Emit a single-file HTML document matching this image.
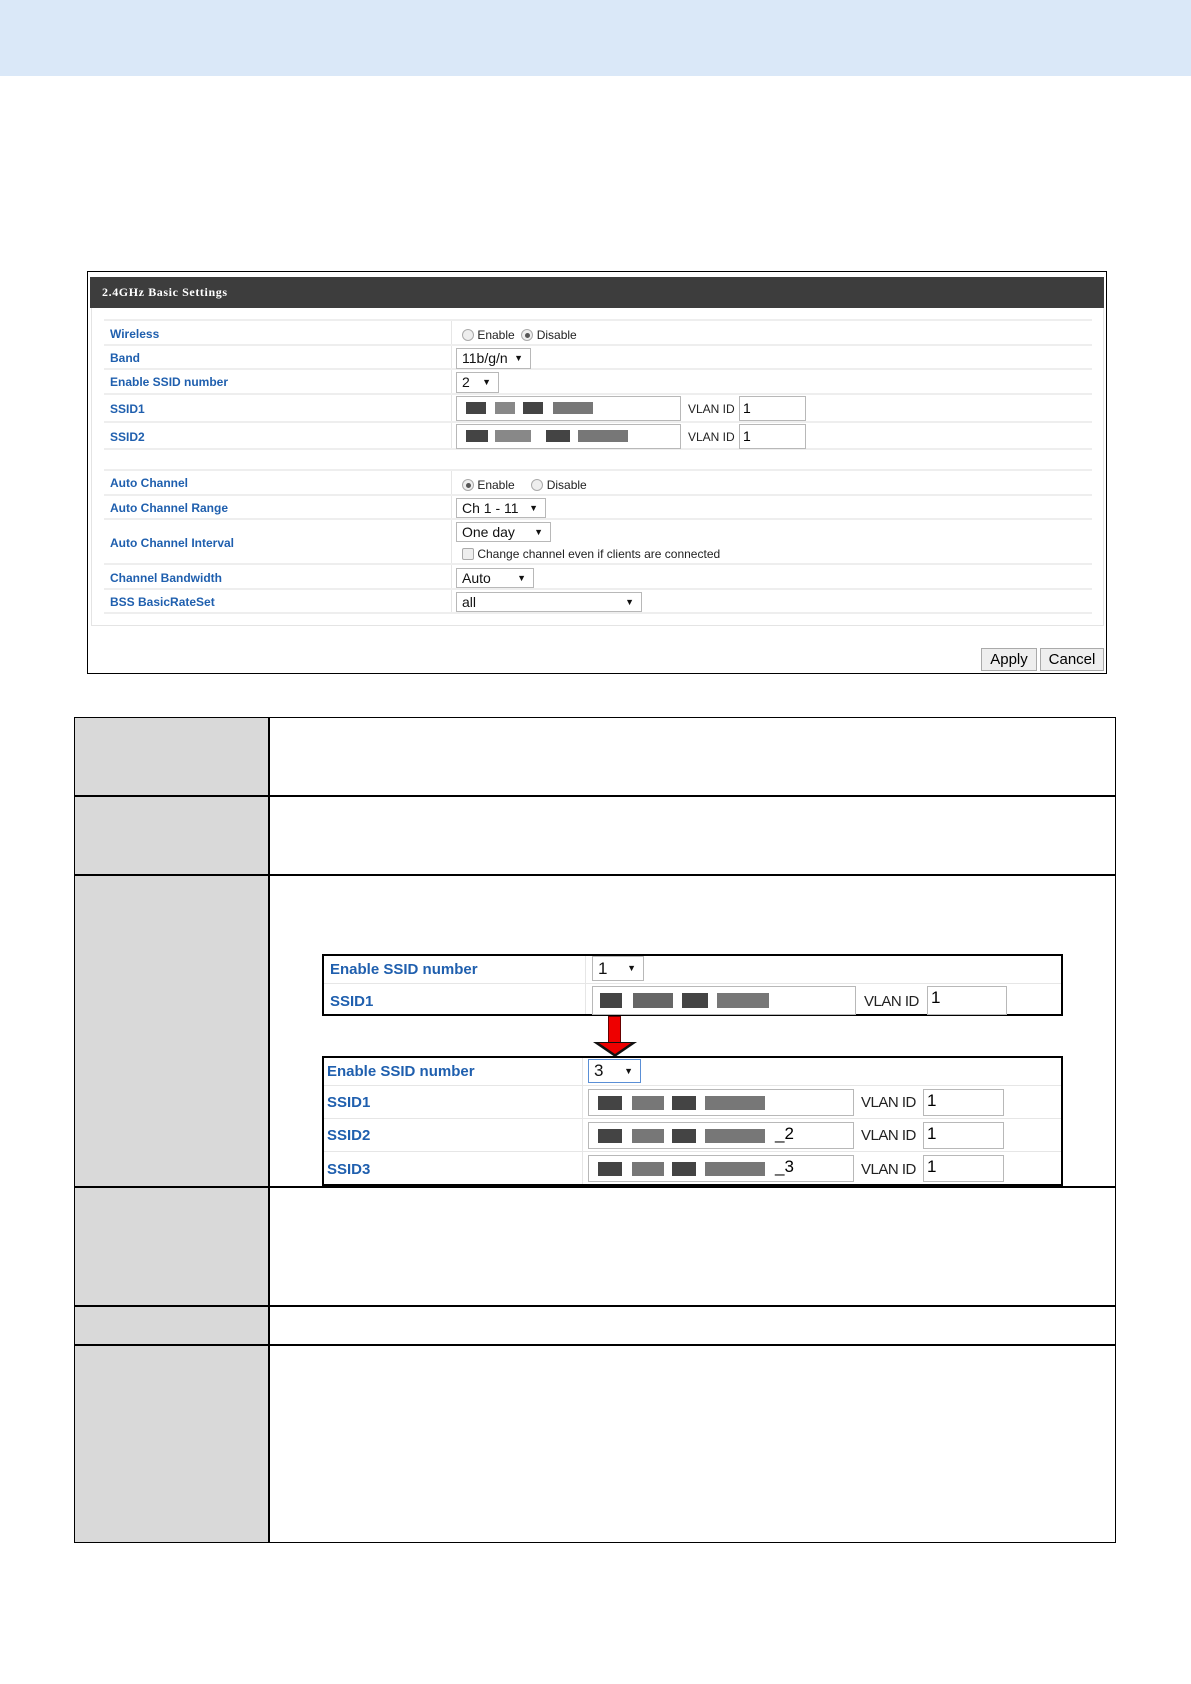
<!DOCTYPE html>
<html><head><meta charset="utf-8"><style>
*{margin:0;padding:0;box-sizing:border-box}
body{width:1191px;height:1684px;background:#fff;position:relative;font-family:"Liberation Sans",Arial,sans-serif;overflow:hidden}
.a{position:absolute}
.lbl{position:absolute;color:#1f5fae;font-weight:bold;font-size:12px}
.sel{position:absolute;border:1px solid #b8b8b8;background:#fff;font-size:14px;color:#111;padding-left:5px;line-height:18px}
.sel:after{content:"▼";position:absolute;right:7px;top:0;font-size:9px}
.inp{position:absolute;border:1px solid #b8b8b8;background:#fff;font-size:14px;padding-left:3px;line-height:22px}
.hl{position:absolute;height:2px;background:#eee}
.px{position:absolute;height:12px}
.rad{display:inline-block;width:12px;height:12px;border:1px solid #aaa;border-radius:50%;background:#eee;vertical-align:-2px;position:relative}
.rad.on:after{content:"";position:absolute;left:3px;top:3px;width:5px;height:5px;border-radius:50%;background:#555}
.vt{position:absolute;font-size:12px;color:#222}
.tl{position:absolute;background:#000}
.big{position:absolute;color:#1f5fae;font-weight:bold;font-size:15px}
.vl{position:absolute;font-size:15px;color:#222;letter-spacing:-0.5px}
</style></head><body>
<div class="a" style="left:0;top:0;width:1191px;height:76px;background:#dae8f8"></div>

<div class="a" style="left:87px;top:271px;width:1020px;height:403px;border:1px solid #000"></div>
<div class="a" style="left:90px;top:277px;width:1014px;height:31px;background:#3d3d3d;color:#fff;font-family:'Liberation Serif',serif;font-weight:bold;font-size:12px;letter-spacing:.6px;line-height:31px;padding-left:12px">2.4GHz Basic Settings</div>
<div class="a" style="left:91px;top:308px;width:1013px;height:318px;border:1px solid #e4e4e4;border-top:none"></div>
<div class="a" style="left:451px;top:320px;width:1px;height:129px;background:#e6e6e6"></div>
<div class="a" style="left:451px;top:470px;width:1px;height:144px;background:#e6e6e6"></div>
<div class="hl" style="left:104px;top:319px;width:988px"></div>
<div class="hl" style="left:104px;top:344px;width:988px"></div>
<div class="hl" style="left:104px;top:368px;width:988px"></div>
<div class="hl" style="left:104px;top:393px;width:988px"></div>
<div class="hl" style="left:104px;top:421px;width:988px"></div>
<div class="hl" style="left:104px;top:448px;width:988px"></div>
<div class="hl" style="left:104px;top:469px;width:988px"></div>
<div class="hl" style="left:104px;top:494px;width:988px"></div>
<div class="hl" style="left:104px;top:518px;width:988px"></div>
<div class="hl" style="left:104px;top:563px;width:988px"></div>
<div class="hl" style="left:104px;top:588px;width:988px"></div>
<div class="hl" style="left:104px;top:612px;width:988px"></div>

<div class="lbl" style="left:110px;top:327px">Wireless</div>
<div class="lbl" style="left:110px;top:351px">Band</div>
<div class="lbl" style="left:110px;top:375px">Enable SSID number</div>
<div class="lbl" style="left:110px;top:402px">SSID1</div>
<div class="lbl" style="left:110px;top:430px">SSID2</div>
<div class="lbl" style="left:110px;top:476px">Auto Channel</div>
<div class="lbl" style="left:110px;top:501px">Auto Channel Range</div>
<div class="lbl" style="left:110px;top:536px">Auto Channel Interval</div>
<div class="lbl" style="left:110px;top:571px">Channel Bandwidth</div>
<div class="lbl" style="left:110px;top:595px">BSS BasicRateSet</div>

<div class="vt" style="left:462px;top:328px"><span class="rad"></span> Enable &nbsp;<span class="rad on"></span> Disable</div>
<div class="sel" style="left:456px;top:348px;width:75px;height:21px">11b/g/n</div>
<div class="sel" style="left:456px;top:372px;width:43px;height:21px">2</div>
<div class="inp" style="left:456px;top:396px;width:225px;height:25px"></div>
<div class="px" style="left:466px;top:402px;width:20px;background:#444"></div>
<div class="px" style="left:495px;top:402px;width:20px;background:#888"></div>
<div class="px" style="left:523px;top:402px;width:20px;background:#444"></div>
<div class="px" style="left:553px;top:402px;width:40px;background:#777"></div>
<div class="vt" style="left:688px;top:402px">VLAN ID</div>
<div class="inp" style="left:739px;top:396px;width:67px;height:25px">1</div>
<div class="inp" style="left:456px;top:424px;width:225px;height:25px"></div>
<div class="px" style="left:466px;top:430px;width:22px;background:#444"></div>
<div class="px" style="left:495px;top:430px;width:36px;background:#888"></div>
<div class="px" style="left:546px;top:430px;width:24px;background:#444"></div>
<div class="px" style="left:578px;top:430px;width:50px;background:#777"></div>
<div class="vt" style="left:688px;top:430px">VLAN ID</div>
<div class="inp" style="left:739px;top:424px;width:67px;height:25px">1</div>

<div class="vt" style="left:462px;top:478px"><span class="rad on"></span> Enable &nbsp;&nbsp;&nbsp;&nbsp;<span class="rad"></span> Disable</div>
<div class="sel" style="left:456px;top:498px;width:90px;height:20px">Ch 1 - 11</div>
<div class="sel" style="left:456px;top:522px;width:95px;height:20px">One day</div>
<div class="vt" style="left:462px;top:547px"><span class="rad" style="border-radius:2px"></span> Change channel even if clients are connected</div>
<div class="sel" style="left:456px;top:568px;width:78px;height:20px">Auto</div>
<div class="sel" style="left:456px;top:592px;width:186px;height:20px">all</div>

<div class="a" style="left:981px;top:648px;width:56px;height:23px;border:1px solid #aaa;background:#eee;font-size:15px;text-align:center;line-height:21px">Apply</div>
<div class="a" style="left:1040px;top:648px;width:64px;height:23px;border:1px solid #aaa;background:#eee;font-size:15px;text-align:center;line-height:21px">Cancel</div>

<div class="a" style="left:74px;top:717px;width:195px;height:826px;background:#d9d9d9"></div>
<div class="a" style="left:74px;top:717px;width:1042px;height:826px;border:1px solid #000"></div>
<div class="tl" style="left:268px;top:717px;width:1.5px;height:826px"></div>
<div class="tl" style="left:74px;top:795px;width:1042px;height:1.5px"></div>
<div class="tl" style="left:74px;top:874px;width:1042px;height:1.5px"></div>
<div class="tl" style="left:74px;top:1186px;width:1042px;height:1.5px"></div>
<div class="tl" style="left:74px;top:1305px;width:1042px;height:1.5px"></div>
<div class="tl" style="left:74px;top:1344px;width:1042px;height:1.5px"></div>

<div class="a" style="left:322px;top:954px;width:741px;height:62px;border:2px solid #000;background:#fff"></div>
<div class="a" style="left:585px;top:956px;width:1px;height:58px;background:#e6e6e6"></div>
<div class="a" style="left:324px;top:983px;width:737px;height:1px;background:#e6e6e6"></div>
<div class="big" style="left:330px;top:961px">Enable SSID number</div>
<div class="big" style="left:330px;top:993px">SSID1</div>
<div class="sel" style="left:592px;top:956px;width:52px;height:25px;font-size:17px;line-height:23px">1</div>
<div class="inp" style="left:592px;top:986px;width:264px;height:29px"></div>
<div class="px" style="left:600px;top:993px;width:22px;height:15px;background:#444"></div>
<div class="px" style="left:633px;top:993px;width:40px;height:15px;background:#666"></div>
<div class="px" style="left:682px;top:993px;width:26px;height:15px;background:#444"></div>
<div class="px" style="left:717px;top:993px;width:52px;height:15px;background:#777"></div>
<div class="vl" style="left:864px;top:993px">VLAN ID</div>
<div class="inp" style="left:927px;top:986px;width:80px;height:29px;font-size:17px">1</div>

<div class="a" style="left:608px;top:1016px;width:13px;height:28px;background:#e00;border:1px solid #600;border-bottom:none"></div>
<div class="a" style="left:593px;top:1042px;width:0;height:0;border-left:22px solid transparent;border-right:22px solid transparent;border-top:15px solid #111"></div>
<div class="a" style="left:599px;top:1043px;width:0;height:0;border-left:16px solid transparent;border-right:16px solid transparent;border-top:11px solid #e00"></div>

<div class="a" style="left:322px;top:1056px;width:741px;height:130px;border:2px solid #000;background:#fff"></div>
<div class="a" style="left:582px;top:1058px;width:1px;height:126px;background:#e6e6e6"></div>
<div class="a" style="left:324px;top:1085px;width:737px;height:1px;background:#e6e6e6"></div>
<div class="a" style="left:324px;top:1118px;width:737px;height:1px;background:#e6e6e6"></div>
<div class="a" style="left:324px;top:1151px;width:737px;height:1px;background:#e6e6e6"></div>
<div class="big" style="left:327px;top:1063px">Enable SSID number</div>
<div class="big" style="left:327px;top:1094px">SSID1</div>
<div class="big" style="left:327px;top:1127px">SSID2</div>
<div class="big" style="left:327px;top:1161px">SSID3</div>
<div class="sel" style="left:588px;top:1059px;width:53px;height:24px;font-size:17px;line-height:22px;border-color:#5a8fd6">3</div>
<div class="inp" style="left:588px;top:1089px;width:266px;height:27px"></div>
<div class="inp" style="left:588px;top:1122px;width:266px;height:27px;font-size:17px;padding-left:186px">_2</div>
<div class="inp" style="left:588px;top:1155px;width:266px;height:27px;font-size:17px;padding-left:186px">_3</div>
<div class="px" style="left:598px;top:1096px;width:24px;height:14px;background:#444"></div>
<div class="px" style="left:632px;top:1096px;width:32px;height:14px;background:#777"></div>
<div class="px" style="left:672px;top:1096px;width:24px;height:14px;background:#444"></div>
<div class="px" style="left:705px;top:1096px;width:60px;height:14px;background:#777"></div>
<div class="px" style="left:598px;top:1129px;width:24px;height:14px;background:#444"></div>
<div class="px" style="left:632px;top:1129px;width:32px;height:14px;background:#777"></div>
<div class="px" style="left:672px;top:1129px;width:24px;height:14px;background:#444"></div>
<div class="px" style="left:705px;top:1129px;width:60px;height:14px;background:#777"></div>
<div class="px" style="left:598px;top:1162px;width:24px;height:14px;background:#444"></div>
<div class="px" style="left:632px;top:1162px;width:32px;height:14px;background:#777"></div>
<div class="px" style="left:672px;top:1162px;width:24px;height:14px;background:#444"></div>
<div class="px" style="left:705px;top:1162px;width:60px;height:14px;background:#777"></div>
<div class="vl" style="left:861px;top:1094px">VLAN ID</div>
<div class="vl" style="left:861px;top:1127px">VLAN ID</div>
<div class="vl" style="left:861px;top:1161px">VLAN ID</div>
<div class="inp" style="left:923px;top:1089px;width:81px;height:27px;font-size:17px">1</div>
<div class="inp" style="left:923px;top:1122px;width:81px;height:27px;font-size:17px">1</div>
<div class="inp" style="left:923px;top:1155px;width:81px;height:27px;font-size:17px">1</div>
</body></html>
